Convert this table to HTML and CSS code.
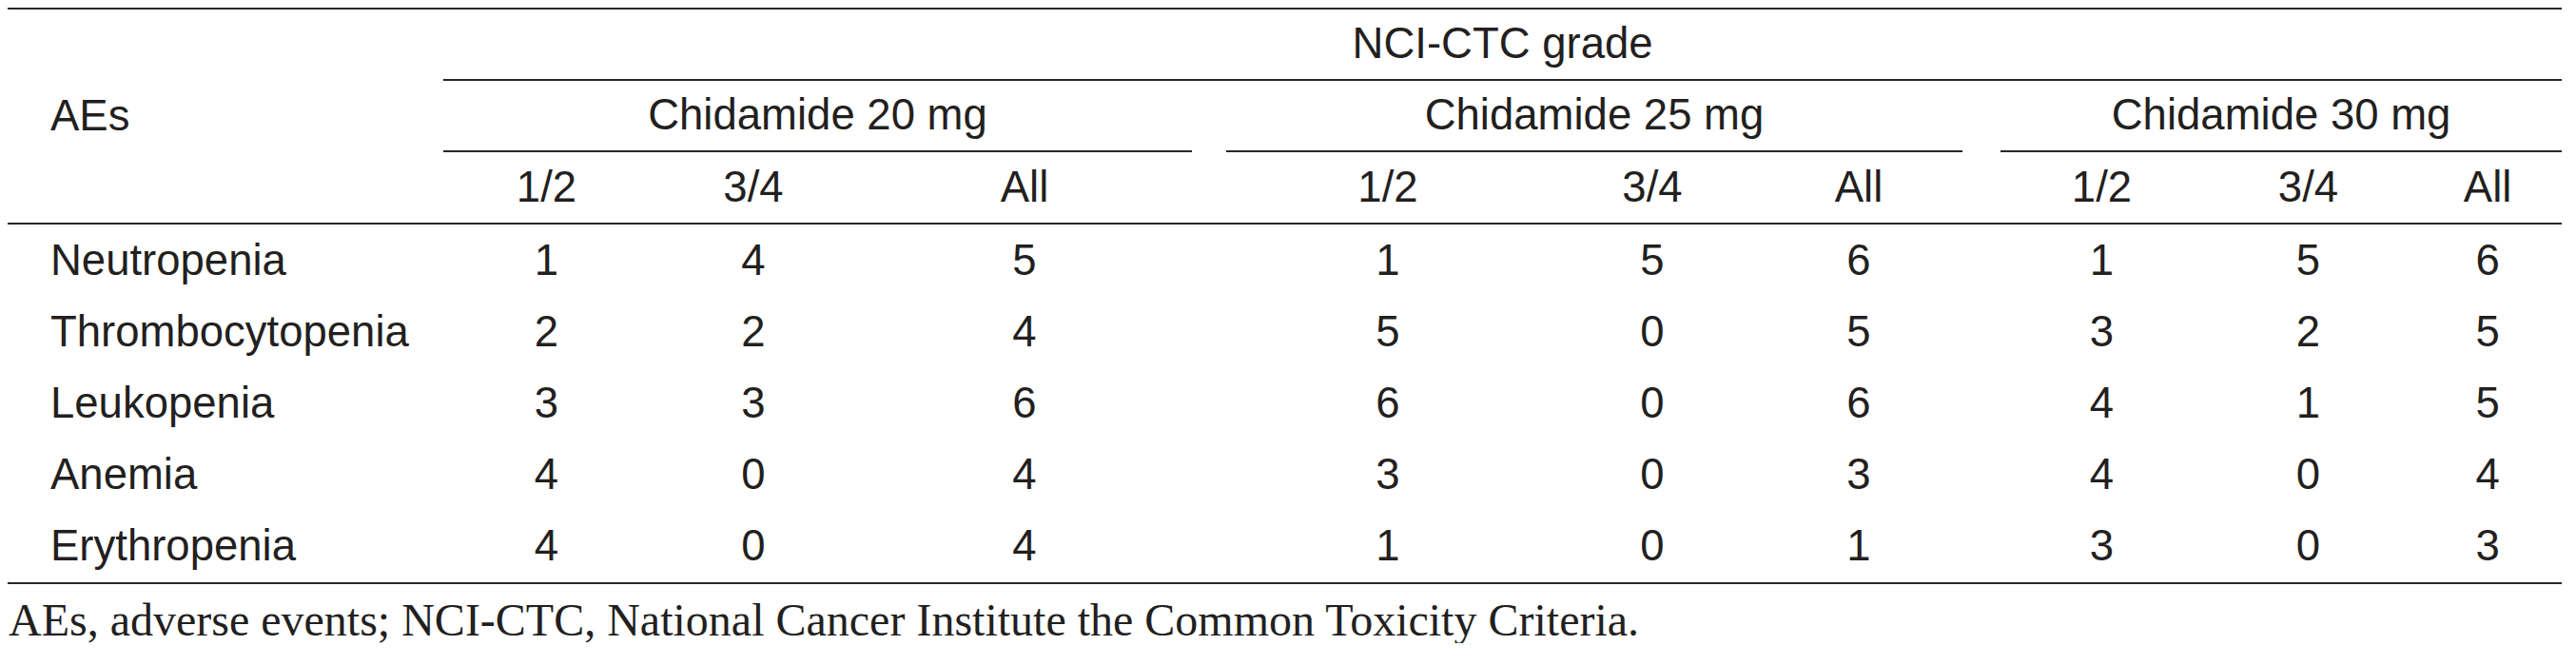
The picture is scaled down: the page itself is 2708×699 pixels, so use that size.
FILE: index.html
```html
<!DOCTYPE html>
<html lang="en">
<head>
<meta charset="utf-8">
<title>Adverse events by NCI-CTC grade</title>
<link rel="stylesheet" href="styles.css">
</head>
<body>
<div class="page">
  <table class="ae-table">
    <colgroup>
      <col class="c-name">
      <col class="c-g1a"><col class="c-g1b"><col class="c-g1c">
      <col class="c-gap1">
      <col class="c-g2a"><col class="c-g2b"><col class="c-g2c">
      <col class="c-gap2">
      <col class="c-g3a"><col class="c-g3b"><col class="c-g3c">
    </colgroup>
    <thead>
      <tr class="h1">
        <th class="name" rowspan="3">AEs</th>
        <th class="ruled" colspan="11">NCI-CTC grade</th>
      </tr>
      <tr class="h2">
        <th class="ruled" colspan="3">Chidamide 20 mg</th>
        <th></th>
        <th class="ruled" colspan="3">Chidamide 25 mg</th>
        <th></th>
        <th class="ruled" colspan="3">Chidamide 30 mg</th>
      </tr>
      <tr class="h3">
        <th>1/2</th><th>3/4</th><th>All</th>
        <th></th>
        <th>1/2</th><th>3/4</th><th>All</th>
        <th></th>
        <th>1/2</th><th>3/4</th><th>All</th>
      </tr>
    </thead>
    <tbody>
      <tr class="r1">
        <td class="name">Neutropenia</td>
        <td>1</td><td>4</td><td>5</td><td></td>
        <td>1</td><td>5</td><td>6</td><td></td>
        <td>1</td><td>5</td><td>6</td>
      </tr>
      <tr>
        <td class="name">Thrombocytopenia</td>
        <td>2</td><td>2</td><td>4</td><td></td>
        <td>5</td><td>0</td><td>5</td><td></td>
        <td>3</td><td>2</td><td>5</td>
      </tr>
      <tr>
        <td class="name">Leukopenia</td>
        <td>3</td><td>3</td><td>6</td><td></td>
        <td>6</td><td>0</td><td>6</td><td></td>
        <td>4</td><td>1</td><td>5</td>
      </tr>
      <tr>
        <td class="name">Anemia</td>
        <td>4</td><td>0</td><td>4</td><td></td>
        <td>3</td><td>0</td><td>3</td><td></td>
        <td>4</td><td>0</td><td>4</td>
      </tr>
      <tr>
        <td class="name">Erythropenia</td>
        <td>4</td><td>0</td><td>4</td><td></td>
        <td>1</td><td>0</td><td>1</td><td></td>
        <td>3</td><td>0</td><td>3</td>
      </tr>
    </tbody>
  </table>
  <p class="footnote">AEs, adverse events; NCI-CTC, National Cancer Institute the Common Toxicity Criteria.</p>
</div>
</body>
</html>
```
FILE: styles.css
```css
html, body {
  margin: 0;
  padding: 0;
  background: #ffffff;
}

.page {
  padding: 8px 0 0 8px;
  color: #231f20;
}

.ae-table {
  width: 2685px;
  table-layout: fixed;
  border-collapse: separate;
  border-spacing: 0;
  border-top: 2px solid #2a2627;
  border-bottom: 2px solid #2a2627;
  font-family: "Liberation Sans", Arial, sans-serif;
  font-size: 45.5px;
  line-height: 1.15;
  color: #231f20;
}

.c-name { width: 458px; }
.c-g1a { width: 217px; }
.c-g1b { width: 218px; }
.c-g1c { width: 352px; }
.c-gap1 { width: 36px; }
.c-g2a { width: 340px; }
.c-g2b { width: 216px; }
.c-g2c { width: 218px; }
.c-gap2 { width: 40px; }
.c-g3a { width: 213px; }
.c-g3b { width: 221px; }
.c-g3c { width: 156px; }

.ae-table th,
.ae-table td {
  padding: 0;
  font-weight: normal;
  text-align: center;
  vertical-align: middle;
  white-space: nowrap;
}

.ae-table .name {
  text-align: left;
  padding-left: 45px;
}

.ae-table th.name {
  border-bottom: 2px solid #2a2627;
}

.ae-table .ruled {
  border-bottom: 2px solid #2a2627;
}

.h1 { height: 75px; }
.h2 { height: 75px; }
.h3 { height: 76px; }

.h3 th {
  border-bottom: 2px solid #2a2627;
}

.ae-table tbody tr { height: 75px; }
.ae-table tbody tr.r1 { height: 76px; }

.footnote {
  margin: 14px 0 0 1px;
  font-family: "Liberation Serif", "Times New Roman", serif;
  font-size: 48px;
  line-height: 1;
  color: #231f20;
}
```
